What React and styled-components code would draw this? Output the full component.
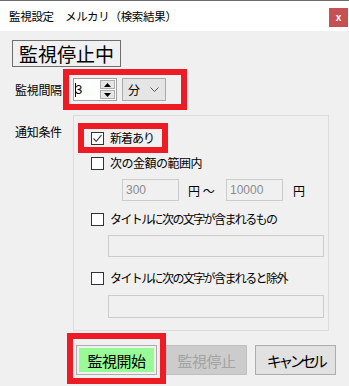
import React from 'react';
import styled, { createGlobalStyle } from 'styled-components';

const GlobalStyle = createGlobalStyle`
  html, body {
    margin: 0;
    padding: 0;
    background: #f0f0f0;
  }
  * {
    box-sizing: border-box;
  }
`;

const FONT = `"Noto Sans CJK JP", "Noto Sans", sans-serif`;

const Window = styled.div`
  width: 349px;
  height: 386px;
  overflow: hidden;
  background: #f0f0f0;
  font-family: ${FONT};
  color: #000;
`;

const TitleBar = styled.div`
  height: 31px;
  border-top: 1px solid #6b6b6b;
  background: #fff;
  display: flex;
  justify-content: space-between;
  align-items: flex-start;
  padding-left: 9px;
`;

const TitleText = styled.span`
  font-size: 11.5px;
  line-height: 14px;
  margin-top: 8px;
  letter-spacing: -0.3px;
`;

const CloseButton = styled.div`
  width: 19px;
  height: 19px;
  margin-top: 7px;
  margin-right: 1px;
  background: #c75050;
  color: #fff;
  font-family: "Liberation Sans", sans-serif;
  font-weight: bold;
  font-size: 10px;
  line-height: 19px;
  text-align: center;
`;

const StatusBox = styled.div`
  width: 109px;
  height: 27px;
  margin: 9px 0 0 12px;
  border: 1px solid #6e6e6e;
  display: flex;
  align-items: center;
  justify-content: center;
  font-size: 19px;
  line-height: 1;
`;

const Highlight = styled.div`
  display: ${p => (p.$inline ? 'inline-flex' : 'flex')};
  align-items: center;
  border: 6px solid #ed1c24;
  padding: ${p => p.$pad || '0'};
`;

const IntervalRow = styled.div`
  display: flex;
  align-items: center;
  margin-top: 2px;
`;

const Label = styled.span`
  font-size: 12px;
  line-height: 16px;
  letter-spacing: -0.3px;
  margin-left: 15px;
  width: 48px;
  white-space: nowrap;
  align-self: ${p => (p.$top ? 'flex-start' : 'center')};
  padding-top: ${p => (p.$top ? '9px' : '0')};
`;

const NumberField = styled.div`
  width: 44px;
  height: 23px;
  border: 1px solid #a0a0a0;
  background: #fff;
  display: flex;
  align-items: stretch;
`;

const NumberValue = styled.div`
  flex: 1;
  display: flex;
  align-items: center;
  padding-left: 1px;
  font-family: "Liberation Sans", sans-serif;
  font-size: 13px;
`;

const Caret = styled.span`
  width: 1px;
  height: 14px;
  background: #000;
  margin-right: -1px;
`;

const SpinBox = styled.div`
  width: 16px;
  display: flex;
  flex-direction: column;
  gap: 1px;
  padding: 1px 1px 1px 0;
`;

const SpinButton = styled.div`
  flex: 1;
  border: 1px solid #adadad;
  background: #e6e6e6;
  display: flex;
  align-items: center;
  justify-content: center;
`;

const SelectBox = styled.div`
  width: 44px;
  height: 23px;
  margin-left: 5px;
  border: 1px solid #acacac;
  background: #e5e5e5;
  display: flex;
  align-items: center;
  justify-content: space-between;
  padding: 0 6px 0 5px;
  font-size: 12px;
`;

const NotifySection = styled.div`
  display: flex;
  margin-top: 5px;
`;

const GroupBox = styled.div`
  width: 256px;
  height: 216px;
  margin-left: 10px;
  border: 1px solid #dcdcdc;
  padding: 7px 0 0 4px;
  display: flex;
  flex-direction: column;
  align-items: flex-start;
`;

const CheckRow = styled.label`
  display: flex;
  align-items: center;
  gap: 6px;
  height: 18px;
  font-size: 12px;
  line-height: 16px;
  white-space: nowrap;
  letter-spacing: ${p => p.$ls ?? -1.6}px;
  margin-left: ${p => p.$indent ?? 13}px;
  margin-top: ${p => p.$top || 0}px;
  padding-right: ${p => p.$right || 0}px;
`;

const Box = styled.span`
  width: 13px;
  height: 13px;
  border: 1px solid #333;
  background: #fff;
  display: flex;
  align-items: center;
  justify-content: center;
`;

const PriceRow = styled.div`
  display: flex;
  align-items: center;
  margin: 7px 0 0 44px;
  font-size: 12px;
`;

const Field = styled.div`
  width: ${p => p.$w}px;
  height: ${p => p.$h || 22}px;
  margin-left: ${p => p.$left || 0}px;
  margin-top: ${p => p.$top || 0}px;
  border: 1px solid #cccccc;
  background: #f0f0f0;
  color: #8c8c8c;
  font-family: "Liberation Sans", sans-serif;
  font-size: 12px;
  display: flex;
  align-items: center;
  padding-left: 3px;
`;

const Unit = styled.span`
  width: ${p => p.$w}px;
  margin-left: ${p => p.$left || 0}px;
  white-space: nowrap;
`;

const ButtonRow = styled.div`
  display: flex;
  align-items: flex-end;
  margin: 2px 0 0 67px;
`;

const Button = styled.div`
  width: 81px;
  height: 30px;
  margin: 0 0 ${p => p.$bottom || 0}px ${p => p.$left || 0}px;
  border: 1px solid ${p => (p.$disabled ? '#bfbfbf' : '#adadad')};
  background: ${p => p.$bg};
  background-clip: ${p => (p.$inset ? 'content-box' : 'border-box')};
  padding: ${p => (p.$inset ? '2px' : '0')};
  color: ${p => (p.$disabled ? '#a3a3a3' : '#000')};
  font-size: 15px;
  letter-spacing: ${p => p.$ls || 0}px;
  white-space: nowrap;
  display: flex;
  align-items: center;
  justify-content: center;
`;

const Check = ({ checked }) => (
  <Box>
    {checked && (
      <svg width="11" height="11" viewBox="0 0 11 11">
        <path d="M1.5 5.5 L4.2 8.3 L9.5 2.2" fill="none" stroke="#444" strokeWidth="1.2" />
      </svg>
    )}
  </Box>
);

const Tri = ({ up }) => (
  <svg width="7" height="4" viewBox="0 0 7 4">
    <path d={up ? 'M0 4 L3.5 0 L7 4 Z' : 'M0 0 L3.5 4 L7 0 Z'} fill="#000" />
  </svg>
);

export default function App() {
  return (
    <Window>
      <GlobalStyle />
      <TitleBar>
        <TitleText>監視設定　メルカリ（検索結果）</TitleText>
        <CloseButton>x</CloseButton>
      </TitleBar>

      <StatusBox>監視停止中</StatusBox>

      <IntervalRow>
        <Label>監視間隔</Label>
        <Highlight $pad="3px 15px 3px 4px">
          <NumberField>
            <NumberValue>
              <Caret />3
            </NumberValue>
            <SpinBox>
              <SpinButton><Tri up /></SpinButton>
              <SpinButton><Tri /></SpinButton>
            </SpinBox>
          </NumberField>
          <SelectBox>
            <span>分</span>
            <svg width="9" height="5" viewBox="0 0 9 5">
              <path d="M0.5 0.5 L4.5 4.5 L8.5 0.5" fill="none" stroke="#555" strokeWidth="1" />
            </svg>
          </SelectBox>
        </Highlight>
      </IntervalRow>

      <NotifySection>
        <Label $top>通知条件</Label>
        <GroupBox>
          <Highlight $inline>
            <CheckRow $indent={7} $right={8} $ls={-1}>
              <Check checked />新着あり
            </CheckRow>
          </Highlight>
          <CheckRow $top={1} $ls={-0.5}>
            <Check />次の金額の範囲内
          </CheckRow>
          <PriceRow>
            <Field $w={57}>300</Field>
            <Unit $w={38} $left={9}>円 ～</Unit>
            <Field $w={57}>10000</Field>
            <Unit $w={20} $left={10}>円</Unit>
          </PriceRow>
          <CheckRow $top={9}>
            <Check />タイトルに次の文字が含まれるもの
          </CheckRow>
          <Field $w={216} $left={30} $top={7} />
          <CheckRow $top={12}>
            <Check />タイトルに次の文字が含まれると除外
          </CheckRow>
          <Field $w={216} $h={23} $left={30} $top={8} />
        </GroupBox>
      </NotifySection>

      <ButtonRow>
        <Highlight $pad="6px 3px 3px 3px">
          <Button $bg="#98fb98" $inset $ls={-0.5}>監視開始</Button>
        </Highlight>
        <Button $bg="#cccccc" $disabled $bottom={9} $ls={-0.5}>監視停止</Button>
        <Button $bg="#e1e1e1" $left={8} $bottom={9} $ls={-3.5}>キャンセル</Button>
      </ButtonRow>
    </Window>
  );
}
